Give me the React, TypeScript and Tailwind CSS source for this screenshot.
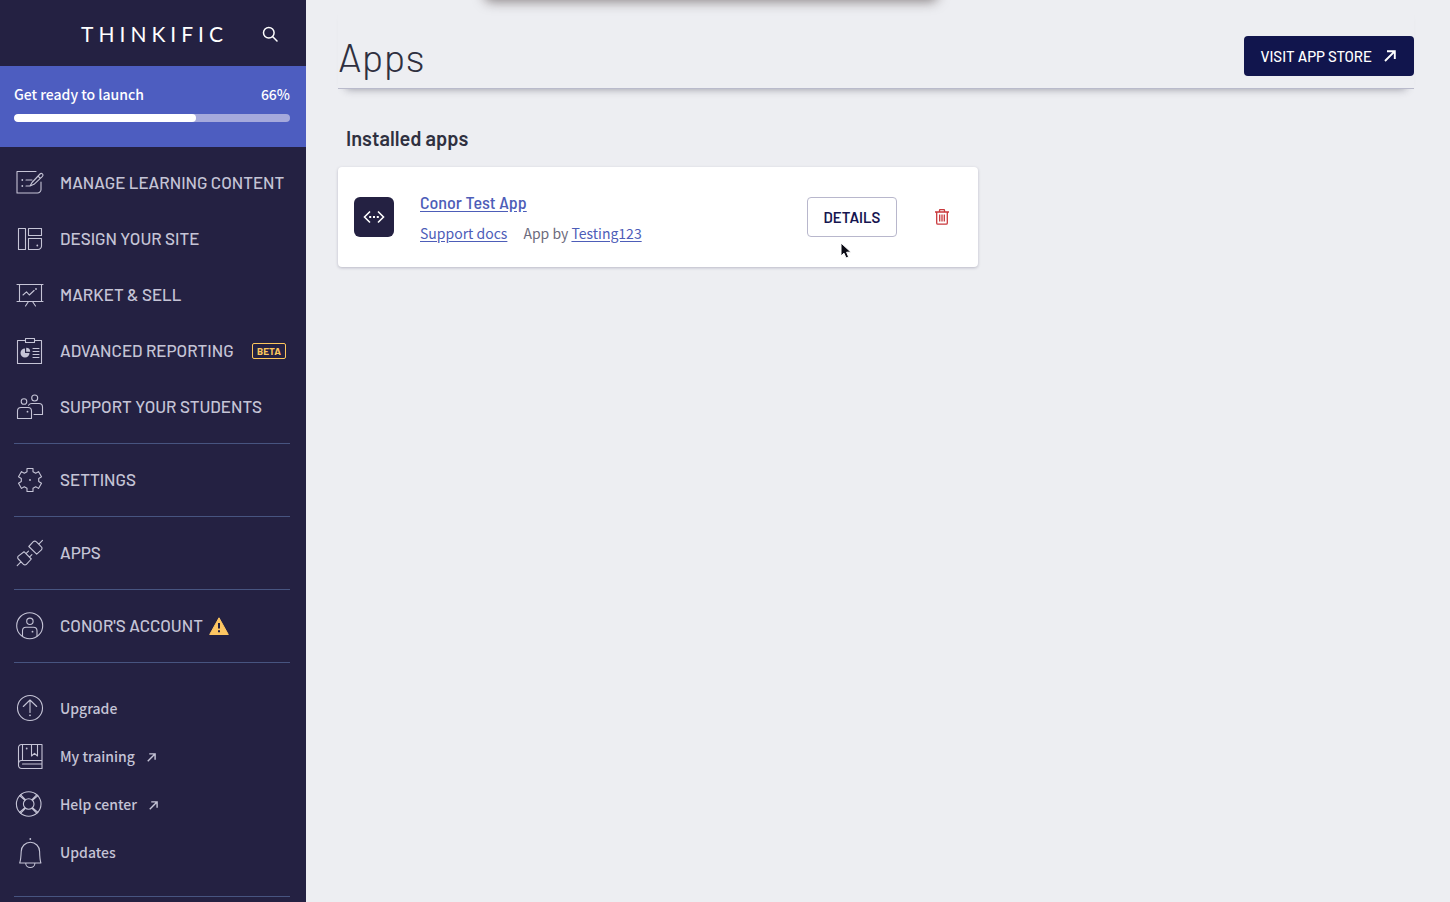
import type { ReactNode } from "react";

const heading = "font-['Barlow','Roboto',sans-serif]";
const semi = "font-['Barlow_Semi_Condensed','Roboto',sans-serif]";
const body = "font-['Source_Sans_Pro','Noto_Sans_CJK_SC',sans-serif]";

function Icon({ children }: { children: ReactNode }) {
  return (
    <span className="flex w-8 shrink-0 justify-center">
      <svg
        viewBox="0 0 28 28"
        className="h-7 w-7 overflow-visible"
        fill="none"
        stroke="currentColor"
        strokeWidth="1.1"
        strokeLinecap="round"
        strokeLinejoin="round"
        aria-hidden="true"
      >
        {children}
      </svg>
    </span>
  );
}

function Dot({ x, y }: { x: number; y: number }) {
  return <circle cx={x} cy={y} r="0.9" fill="currentColor" stroke="none" />;
}

const icons = {
  content: (
    <Icon>
      <path d="M20 2.5H1v21.500h20.500a3.500 3.500 0 0 0 3.500-3.500V13" />
      <path d="M10 11h6M10 17h4l2-3.500 8-8.500a1.600 1.600 0 0 1 2.500 2.300l-8.500 8L14 17M22 7l2.300 2.300" />
      <Dot x={6.3} y={11} />
      <Dot x={6.3} y={17} />
    </Icon>
  ),
  design: (
    <Icon>
      <path d="M2.500 3.500h7v21h-7zM12.500 3.500h13v7h-13zM12.500 13.500h13V21a3.500 3.500 0 0 1-3.500 3.500h-9.500z" />
      <Dot x={21.3} y={20.5} />
    </Icon>
  ),
  market: (
    <Icon>
      <path d="M1 3.500h26M1 20.500h26M3.500 3.500v17M25.500 3.500v17" />
      <path d="M7 14l3.500-3.200 2.800 3.200 4.800-4.500M9.500 25l3-4.500h4l3 4.500" />
      <Dot x={20} y={8} />
    </Icon>
  ),
  reporting: (
    <Icon>
      <path d="M9.500 3.500h-8v23h24v-23h-7M9.500 1.500h9v4h-9z" />
      <path d="M9 11.500v4.500h4.500A4.500 4.500 0 1 1 9 11.500z" fill="currentColor" stroke="none" />
      <path d="M10.200 10.800a4 4 0 0 1 4 4h-4z" fill="currentColor" stroke="none" />
      <path d="M17 11.500h6M17 14.500h6M17 17.500h6M17 20.500h6" />
    </Icon>
  ),
  students: (
    <Icon>
      <circle cx="8" cy="8.500" r="2.800" />
      <circle cx="18.700" cy="5" r="3" />
      <path d="M1.500 25.500V18a3.500 3.500 0 0 1 3.500-3.500h7a3.500 3.500 0 0 1 3.500 3.500v7.500z" />
      <path d="M12.500 12.200c.8-1.100 1.900-1.700 3.200-1.700H23a3.500 3.500 0 0 1 3.500 3.500v7.500H18" />
      <Dot x={11.5} y={18.7} />
    </Icon>
  ),
  settings: (
    <Icon>
      <path d="M11 5.800V2.500h6v3.300l2.700 1.500 2.800-1.700 3 5.200-2.800 1.700v3l2.800 1.700-3 5.200-2.800-1.700-2.700 1.500v3.300h-6v-3.300l-2.700-1.500-2.800 1.700-3-5.200 2.800-1.700v-3l-2.800-1.700 3-5.200 2.800 1.700z" />
      <Dot x={14} y={14} />
    </Icon>
  ),
  apps: (
    <Icon>
      <path d="M12.800 7.500l4.500-4.800a2 2 0 0 1 2.900 0l5.200 5.200a2 2 0 0 1 0 2.900l-4.700 4.400zM22.800 5.200l3.700-3.900" />
      <path d="M8 12.700l7.300 7.300-4.900 5.300a2 2 0 0 1-2.900 0L2.300 20a2 2 0 0 1 0-2.900zM4.900 22.800l-3.700 3.900M10 14.700l2.500-2.500M13.400 18.100l2.500-2.500" />
    </Icon>
  ),
  account: (
    <Icon>
      <circle cx="13.700" cy="13.700" r="13" />
      <circle cx="13.900" cy="9.300" r="3.200" />
      <path d="M6.500 24v-5.200a3.500 3.500 0 0 1 3.500-3.500h7.500a3.500 3.500 0 0 1 3.500 3.500V24" />
      <Dot x={16.5} y={19.7} />
    </Icon>
  ),
  upgrade: (
    <Icon>
      <circle cx="14" cy="14" r="12.500" />
      <path d="M14 6v12.500M7.300 12.500L14 6l6.700 6.500" />
      <Dot x={14} y={21.3} />
    </Icon>
  ),
  book: (
    <Icon>
      <path d="M26 2.500H5.500a3 3 0 0 0-3 3v18a3 3 0 0 0 3 3H26v-24zM26 18.500H5.500a3 3 0 0 0-3 3M6.500 2.500v16M26 22H6.500" />
      <path d="M15.500 2.500V14l3-2.700 3 2.700V2.500" />
      <Dot x={10.7} y={6.5} />
    </Icon>
  ),
  help: (
    <Icon>
      <circle cx="12.700" cy="14" r="12.300" />
      <circle cx="12.700" cy="14" r="5.300" />
      <path d="M3.500 5.700l5.200 4.500M4.500 4.700l4.900 5M21.900 5.700l-5.200 4.500M20.900 4.700l-4.900 5M3.500 22.300l5.200-4.500M4.500 23.300l4.900-5M21.900 22.300l-5.200-4.500M20.900 23.300l-4.900-5" />
    </Icon>
  ),
  bell: (
    <Icon>
      <path d="M3.700 25c1.100-3 1.300-6.500 1.500-11.500a9.200 9.200 0 0 1 18.400 0c.1 5 .3 8.500 1.300 11.500zM9.700 25.200a4.600 4.300 0 0 0 9.200 0" />
      <Dot x={14.3} y={1} />
    </Icon>
  ),
};

function ArrowUpRight({ className }: { className: string }) {
  return (
    <svg viewBox="0 0 12 12" className={className} fill="none" stroke="currentColor" strokeWidth="1.900" aria-hidden="true">
      <path d="M1 11L10.600 1.400M3 1.200h7.800V9" />
    </svg>
  );
}

function NavItem({ icon, label, children }: { icon: ReactNode; label: string; children?: ReactNode }) {
  return (
    <li>
      <a href="#" className={`${heading} flex h-14 items-center gap-3.5 text-[17px] font-medium uppercase`}>
        {icon}
        <span className="whitespace-nowrap">{label}</span>
        {children}
      </a>
    </li>
  );
}

function HelpItem({ icon, label, external }: { icon: ReactNode; label: string; external?: boolean }) {
  return (
    <li>
      <a href="#" className={`${body} flex h-12 items-center gap-3.5 text-sm leading-6 font-medium`}>
        {icon}
        <span className="flex items-center gap-3">
          {label}
          {external && <ArrowUpRight className="mt-0.5 h-[9px] w-[9px]" />}
        </span>
      </a>
    </li>
  );
}

function Divider() {
  return <li role="separator" className="my-2 h-px bg-[#475480]" />;
}

function Sidebar() {
  return (
    <aside className="w-[306px] shrink-0 bg-[#242142] text-[#c5c4d6]">
      <div className="flex h-[66px] items-center justify-end gap-[34px] pt-0.5 pr-7 text-white">
        <a href="#" className="font-['Lato',sans-serif] text-[21px] leading-6 tracking-[5px]">
          THINKIFIC
        </a>
        <button type="button" aria-label="Search">
          <svg viewBox="0 0 16 16" className="h-4 w-4" fill="none" stroke="currentColor" strokeWidth="1.500" strokeLinecap="round">
            <circle cx="6.800" cy="6.800" r="5.300" />
            <path d="M10.800 10.800L15 15" />
          </svg>
        </button>
      </div>

      <div className={`${body} h-[81px] bg-[#4d5dc0] pt-4 pr-4 pl-3.5 text-white`}>
        <div className="flex justify-between text-sm leading-6 font-medium">
          <span id="launch">Get ready to launch</span>
          <span>66%</span>
        </div>
        <div
          role="progressbar"
          aria-labelledby="launch"
          aria-valuenow={66}
          className="mt-2 h-2 overflow-hidden rounded-full bg-[#a5a9dc]"
        >
          <div className="h-full w-[66%] rounded-full bg-white" />
        </div>
      </div>

      <nav className="pr-4 pl-3.5">
        <ul className="pt-2">
          <NavItem icon={icons.content} label="Manage learning content" />
          <NavItem icon={icons.design} label="Design your site" />
          <NavItem icon={icons.market} label="Market & sell" />
          <NavItem icon={icons.reporting} label="Advanced reporting">
            <span className="mr-1 ml-auto rounded-xs border border-[#fcc65c] px-1 text-[10px] leading-[14px] font-bold text-[#fcc65c]">
              Beta
            </span>
          </NavItem>
          <NavItem icon={icons.students} label="Support your students" />
          <Divider />
          <NavItem icon={icons.settings} label="Settings" />
          <Divider />
          <NavItem icon={icons.apps} label="Apps" />
          <Divider />
          <NavItem icon={icons.account} label="Conor's account">
            <svg viewBox="0 0 20 18" className="-ml-2 h-[18px] w-5" aria-hidden="true">
              <path d="M10 .8L19.300 17.500H.7z" fill="#fdc662" stroke="#fdc662" strokeLinejoin="round" />
              <path d="M10 6v5.500M10 13.300v2" stroke="#242142" strokeWidth="2" />
            </svg>
          </NavItem>
          <Divider />
        </ul>
        <ul className="pt-[13px]">
          <HelpItem icon={icons.upgrade} label="Upgrade" />
          <HelpItem icon={icons.book} label="My training" external />
          <HelpItem icon={icons.help} label="Help center" external />
          <HelpItem icon={icons.bell} label="Updates" />
          <li role="separator" className="mt-5 h-px bg-[#475480]" />
        </ul>
      </nav>
    </aside>
  );
}

function AppCard() {
  return (
    <article className="relative flex h-[100px] max-w-[640px] items-center rounded-sm bg-white pr-[27px] pl-4 shadow-[0_1px_3px_rgba(36,33,66,0.25)]">
      <div className="flex h-10 w-10 shrink-0 items-center justify-center rounded-md bg-[#242142] text-white">
        <svg viewBox="0 0 22 14" className="h-3.5 w-[22px]" fill="none" stroke="currentColor" strokeWidth="1.600" aria-hidden="true">
          <path d="M7 1.500L1.500 7 7 12.500M15 1.500L20.500 7 15 12.500" />
          <path d="M6.200 7h2M10 7h2M13.800 7h2" strokeWidth="2" />
        </svg>
      </div>

      <div className="ml-[26px] flex-1">
        <h3 className={`${semi} text-lg leading-6 font-medium text-[#4d5db8]`}>
          <a href="#" className="underline underline-offset-2">
            Conor Test App
          </a>
        </h3>
        <p className={`${body} mt-[7px] flex gap-4 text-sm leading-6 text-[#6d6b7d]`}>
          <a href="#" className="text-[#4d5db8] underline underline-offset-2">
            Support docs
          </a>
          <span>
            App by{" "}
            <a href="#" className="text-[#4d5db8] underline underline-offset-2">
              Testing123
            </a>
          </span>
        </p>
      </div>

      <button
        type="button"
        className={`${heading} h-10 w-[90px] rounded-sm border border-[#b8b7cc] text-[15px] font-semibold text-[#161650] uppercase`}
      >
        Details
      </button>
      <button type="button" aria-label="Uninstall" className="ml-9 flex h-10 w-[18px] items-center justify-center text-[#c9383c]">
        <svg viewBox="0 0 14 16" className="h-4 w-3.5" fill="none" stroke="currentColor" strokeWidth="1.300" aria-hidden="true">
          <path d="M0 3h14M4.500 3V1.500a1 1 0 0 1 1-1h3a1 1 0 0 1 1 1V3M1.700 3v11a1.200 1.200 0 0 0 1.200 1.200h8.200a1.200 1.200 0 0 0 1.200-1.200V3M4.700 5.500v7M7 5.500v7M9.300 5.500v7" />
        </svg>
      </button>

      {/* mouse pointer */}
      <svg viewBox="0 0 12 18" className="absolute top-[75px] left-[502px] h-[18px] w-3" aria-hidden="true">
        <path
          d="M1 1v13l3-2.800 2 4.800 2.600-1.100-2-4.700H11z"
          fill="#0b0b14"
          stroke="#fff"
        />
      </svg>
    </article>
  );
}

export default function App() {
  return (
    <div className="relative flex min-h-screen overflow-hidden bg-[#edeef2]">
      <div className="absolute -top-10 left-[484px] h-10 w-[454px] rounded-lg bg-white shadow-[0_2px_12px_rgba(50,35,35,0.5)]" />
      <Sidebar />
      <main className="min-w-0 flex-1 pr-9 pl-8 text-[#2f3040]">
        <header className="flex h-[89px] items-end justify-between border-b border-[#b9bacb] pb-3 shadow-[0_8px_8px_-8px_rgba(40,40,60,0.45)]">
          <h1 className={`${heading} -mb-1 text-[40px] leading-12 font-light`}>Apps</h1>
          <a
            href="#"
            className={`${heading} flex h-10 items-center gap-2.5 rounded-sm bg-[#11154d] px-4 text-[15px] font-medium text-white uppercase`}
          >
            Visit app store
            <span className="flex w-4 justify-center">
              <ArrowUpRight className="h-3 w-3" />
            </span>
          </a>
        </header>
        <section className="pt-9">
          <h2 className={`${heading} mb-4 ml-2 text-xl leading-[26px] font-semibold`}>Installed apps</h2>
          <AppCard />
        </section>
      </main>
    </div>
  );
}
